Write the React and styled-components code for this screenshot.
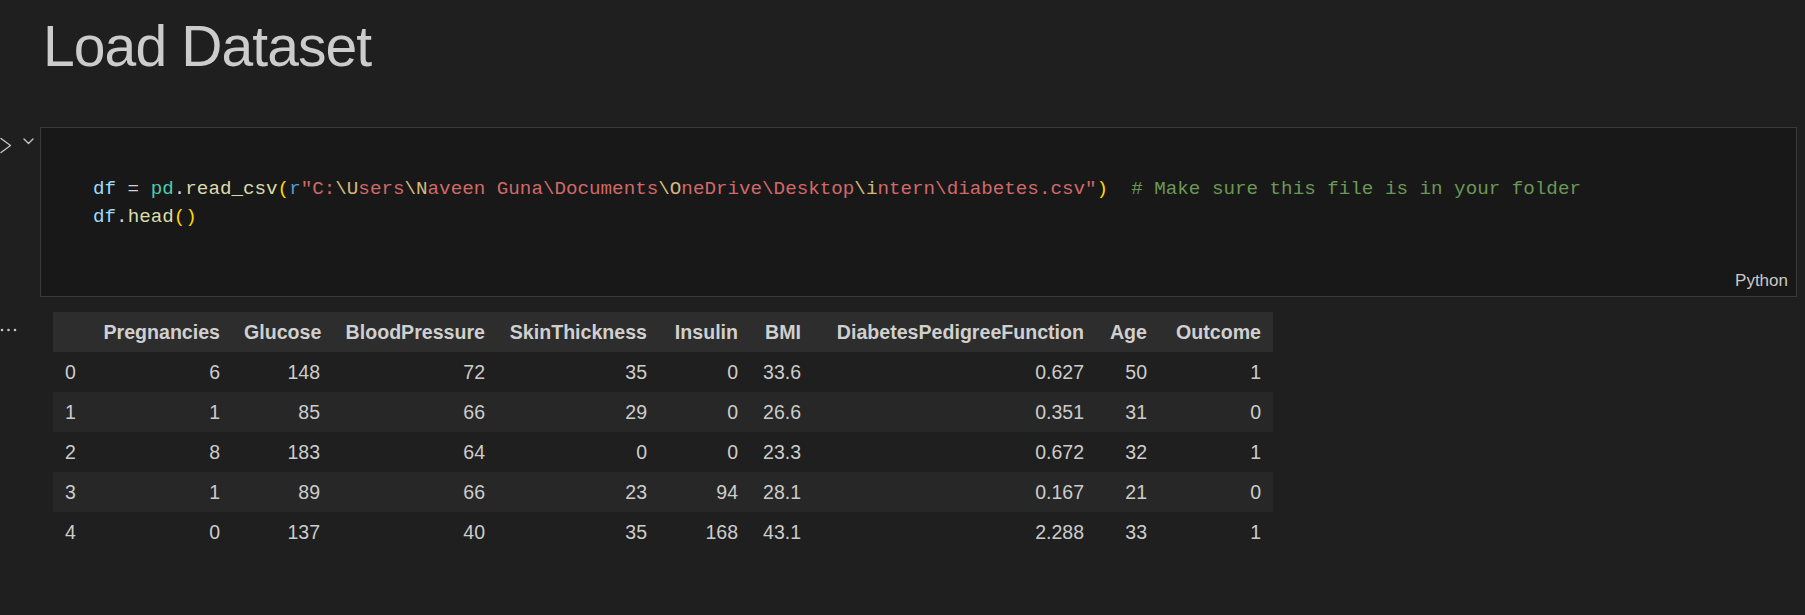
import React from "react";
import styled, { createGlobalStyle } from "styled-components";

const Global = createGlobalStyle`
  html, body { margin: 0; padding: 0; background: #1f1f1f; }
  body { overflow: hidden; width: 1805px; height: 615px; font-family: "Liberation Sans", Arial, sans-serif; }
`;

const Page = styled.div`
  display: flex;
  flex-direction: column;
  width: 1805px;
  height: 615px;
  background: #1f1f1f;
`;

const Title = styled.h1`
  margin: 12px 0 0 43px;
  font-family: "Liberation Sans", Arial, sans-serif;
  font-weight: 400;
  font-size: 57px;
  letter-spacing: -0.9px;
  line-height: 68px;
  color: #cccccc;
`;

const CellRow = styled.div`
  display: flex;
  margin-top: 47px;
`;

const Gutter = styled.div`
  width: 40px;
  flex: none;
  display: flex;
  align-items: flex-start;
  padding-top: 10px;
  gap: 11px;
`;

const CellBox = styled.div`
  width: 1757px;
  height: 170px;
  box-sizing: border-box;
  border: 1px solid #3a3a3a;
  background: #181818;
  display: flex;
  flex-direction: column;
`;

const Editor = styled.pre`
  margin: 0;
  padding: 47px 0 0 52px;
  font-family: "Liberation Mono", "DejaVu Sans Mono", monospace;
  font-size: 19.23px;
  line-height: 28px;
  color: #d4d4d4;
  white-space: pre;
`;

const Tok = styled.span`
  color: ${(p) => p.$c};
`;

const LangBar = styled.div`
  margin-top: auto;
  display: flex;
  justify-content: flex-end;
  padding: 0 8px 5px 0;
`;

const Lang = styled.span`
  font-family: "Liberation Sans", Arial, sans-serif;
  font-size: 17px;
  line-height: 20px;
  color: #c8c8c8;
`;

const OutputRow = styled.div`
  display: flex;
  margin-top: 15px;
`;

const OutGutter = styled.div`
  width: 53px;
  flex: none;
  padding-top: 7px;
`;

const Table = styled.table`
  border-collapse: collapse;
  border-spacing: 0;
  table-layout: fixed;
  width: 1220px;
  font-family: "Liberation Sans", Arial, sans-serif;
  color: #cccccc;
`;

const HeadRow = styled.tr`
  background: #2d2d2d;
`;

const BodyRow = styled.tr`
  background: ${(p) => (p.$odd ? "#272727" : "#1f1f1f")};
`;

const Th = styled.th`
  height: 40px;
  padding: 0 12px;
  text-align: right;
  font-size: 19.6px;
  font-weight: 700;
  white-space: nowrap;
  color: #d0d0d0;
`;

const Td = styled.td`
  height: 40px;
  padding: 0 12px;
  text-align: ${(p) => (p.$left ? "left" : "right")};
  font-size: 19.5px;
  white-space: nowrap;
`;

const Chevron = ({ d, w, h }) => (
  <svg width={w} height={h} viewBox={`0 0 ${w} ${h}`} fill="none">
    <path d={d} stroke="#c5c5c5" strokeWidth="1.4" strokeLinecap="round" strokeLinejoin="round" />
  </svg>
);

const Dots = () => (
  <svg width="20" height="6" viewBox="0 0 20 6">
    <circle cx="2" cy="3" r="1.3" fill="#c5c5c5" />
    <circle cx="8.5" cy="3" r="1.3" fill="#c5c5c5" />
    <circle cx="15" cy="3" r="1.3" fill="#c5c5c5" />
  </svg>
);

const C = {
  var: "#9cdcfe",
  op: "#d4d4d4",
  cls: "#4ec9b0",
  fn: "#dcdcaa",
  br: "#ffd700",
  kw: "#569cd6",
  str: "#d16969",
  esc: "#d7ba7d",
  cm: "#6a9955",
};

const line1 = [
  ["df", C.var], [" = ", C.op], ["pd", C.cls], [".", C.op], ["read_csv", C.fn], ["(", C.br],
  ["r", C.kw], ['"C:', C.str], ["\\U", C.esc], ["sers", C.str], ["\\N", C.esc], ["aveen Guna", C.str],
  ["\\Documents", C.str], ["\\O", C.esc], ["neDrive", C.str], ["\\Desktop", C.str], ["\\i", C.esc],
  ["ntern", C.str], ["\\diabetes.csv\"", C.str], [")", C.br], ["  # Make sure this file is in your folder", C.cm],
];
const line2 = [["df", C.var], [".", C.op], ["head", C.fn], ["()", C.br]];

const cols = [36, 143, 100, 165, 162, 91, 63, 283, 63, 114];
const headers = ["", "Pregnancies", "Glucose", "BloodPressure", "SkinThickness", "Insulin", "BMI", "DiabetesPedigreeFunction", "Age", "Outcome"];
const rows = [
  ["0", "6", "148", "72", "35", "0", "33.6", "0.627", "50", "1"],
  ["1", "1", "85", "66", "29", "0", "26.6", "0.351", "31", "0"],
  ["2", "8", "183", "64", "0", "0", "23.3", "0.672", "32", "1"],
  ["3", "1", "89", "66", "23", "94", "28.1", "0.167", "21", "0"],
  ["4", "0", "137", "40", "35", "168", "43.1", "2.288", "33", "1"],
];

export default function App() {
  return (
    <Page>
      <Global />
      <Title>Load Dataset</Title>
      <CellRow>
        <Gutter>
          <Chevron w={12} h={17} d="M1 1.5 L10.5 8.5 L1 15.5" />
          <Chevron w={11} h={8} d="M1 2 L5.5 6.5 L10 2" />
        </Gutter>
        <CellBox>
          <Editor>
            {line1.map(([t, c], i) => <Tok key={i} $c={c}>{t}</Tok>)}
            {"\n"}
            {line2.map(([t, c], i) => <Tok key={i} $c={c}>{t}</Tok>)}
          </Editor>
          <LangBar>
            <Lang>Python</Lang>
          </LangBar>
        </CellBox>
      </CellRow>
      <OutputRow>
        <OutGutter>
          <Dots />
        </OutGutter>
        <Table>
          <colgroup>
            {cols.map((w, i) => <col key={i} style={{ width: w }} />)}
          </colgroup>
          <thead>
            <HeadRow>
              {headers.map((h, i) => <Th key={i}>{h}</Th>)}
            </HeadRow>
          </thead>
          <tbody>
            {rows.map((r, ri) => (
              <BodyRow key={ri} $odd={ri % 2 === 1}>
                {r.map((v, ci) => <Td key={ci} $left={ci === 0}>{v}</Td>)}
              </BodyRow>
            ))}
          </tbody>
        </Table>
      </OutputRow>
    </Page>
  );
}
